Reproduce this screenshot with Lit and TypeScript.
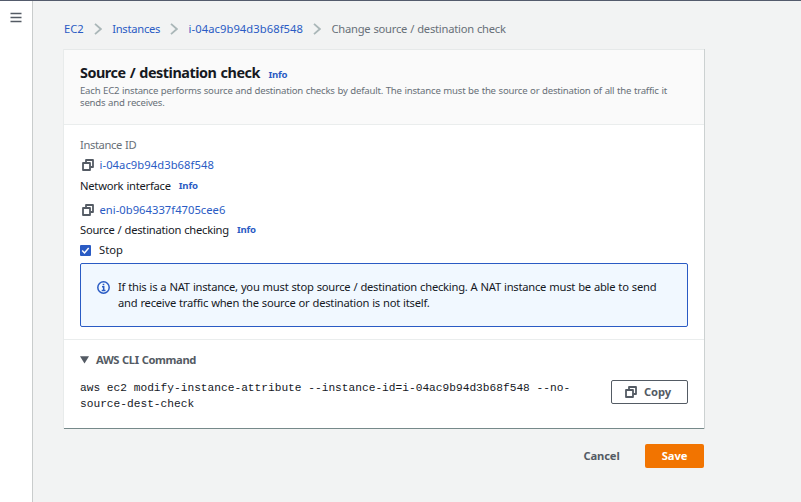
import { LitElement, html, css, svg } from "lit";
import { customElement } from "lit/decorators.js";

const copyIcon = html`<svg class="copy" width="12" height="12" viewBox="0 0 12 12" fill="none" stroke="#545b64" stroke-width="1.8" stroke-linejoin="round">
  ${svg`<path d="M1 4h7v7H1z"/><path d="M4 3.6V1h7v7H8.4"/>`}
</svg>`;

const chevron = html`<svg class="chevron" width="8" height="12" viewBox="0 0 8 12" fill="none" stroke="#aab7b8" stroke-width="1.8">
  <path d="M1 .8 6.8 6 1 11.2"/>
</svg>`;

@customElement("app-root")
export class AppRoot extends LitElement {
  static styles = css`
    :host {
      display: flex;
      box-sizing: border-box;
      width: 801px;
      height: 502px;
      overflow: hidden;
      border-top: 1px solid #545b6c;
      background: #f2f3f3;
      color: #16191f;
      font: 11.2px/16px "Noto Sans", sans-serif;
      letter-spacing: -.24px;
      word-spacing: .4px;
    }
    * { box-sizing: border-box; }
    svg { display: block; flex: none; }
    a { color: #2a5bc4; text-decoration: none; }
    nav.side {
      width: 33px;
      flex: none;
      background: #fff;
      border-right: 1px solid #c9cccc;
      padding: 11px 0 0 10px;
    }
    main { width: 640px; flex: none; margin-left: 31px; }
    .crumbs { display: flex; align-items: center; height: 16px; margin-top: 20px; color: #687078; white-space: nowrap; }
    .crumbs .short { letter-spacing: 0; }
    .crumbs .section { letter-spacing: -.27px; }
    .id { letter-spacing: .07px; }
    .chevron { margin: 0 10.5px 0 10px; }
    .card {
      margin-top: 12px;
      height: 380px;
      background: #fff;
      border-top: 1px solid #e6e9e9;
      border-bottom: 1px solid #76898a;
      box-shadow: 1px 0 0 #ccd1d1, -1px 0 0 #e8ebeb;
    }
    header { height: 75px; padding: 12px 16px 0; background: #fafafa; border-bottom: 1px solid #eaeded; }
    h1 { margin: 0; font-size: 14.4px; line-height: 21px; font-weight: 700; letter-spacing: -.48px; word-spacing: .9px; display: flex; align-items: baseline; }
    .info { font-size: 9.6px; font-weight: 700; margin-left: 8px; letter-spacing: -.2px; }
    h1 .info { margin-left: 8.5px; }
    .desc { margin: 0; font-size: 9.6px; line-height: 12px; color: #687078; letter-spacing: -.21px; white-space: nowrap; }
    .body { height: 215px; padding: 12px 16px 0; border-bottom: 1px solid #eaeded; }
    .row { display: flex; align-items: center; height: 16px; }
    .row .copy { margin: 0 5.5px 0 2px; }
    .muted { color: #687078; letter-spacing: -.37px; }
    .value { margin: 4px 0 5px; }
    .value.eni { margin: 8px 0 4px; }
    .eni .id { letter-spacing: .03px; }
    .stop { margin-top: 4px; letter-spacing: 0; }
    .box { margin-right: 8px; }
    .alert {
      display: flex;
      height: 64px;
      margin-top: 5px;
      padding: 15px 0 0 16px;
      background: #f1f8ff;
      border: 1px solid #2a5bc4;
      border-radius: 2px;
      white-space: nowrap;
    }
    .alert svg { margin: 2px 8px 0 0; }
    .cli { padding: 12px 16px 0; }
    .toggle { display: flex; align-items: center; height: 16px; font-weight: 700; color: #545b64; letter-spacing: -.38px; }
    .toggle svg { margin-right: 7px; }
    .command { display: flex; justify-content: space-between; margin-top: 12px; }
    code { font: 11.2px/16px "Liberation Mono", monospace; letter-spacing: 0; word-spacing: 0; white-space: nowrap; }
    button {
      display: flex;
      align-items: center;
      justify-content: center;
      height: 24px;
      padding: 0;
      border: 1px solid transparent;
      border-radius: 2px;
      background: transparent;
      color: #545b64;
      font: 700 11.2px/16px "Noto Sans", sans-serif;
      letter-spacing: -.12px;
    }
    .copy-btn { width: 77px; background: #fff; border-color: #545b64; justify-content: flex-start; padding-left: 12.5px; }
    .copy-btn svg { margin-right: 7.5px; }
    footer { display: flex; justify-content: flex-end; margin-top: 15px; }
    .cancel { width: 69px; margin-right: 9px; }
    .save { width: 59px; background: #f27400; color: #fff; }
  `;

  render() {
    return html`
      <nav class="side">
        <svg width="12" height="11" viewBox="0 0 12 11" fill="none" stroke="#545b64" stroke-width="1.7"><path d="M.5 1.5h11M.5 5.5h11M.5 9.5h11"/></svg>
      </nav>
      <main>
        <div class="crumbs">
          <a class="short">EC2</a>${chevron}<a class="section">Instances</a>${chevron}<a class="id">i-04ac9b94d3b68f548</a>${chevron}<span>Change source / destination check</span>
        </div>
        <section class="card">
          <header>
            <h1>Source / destination check<a class="info">Info</a></h1>
            <p class="desc">Each EC2 instance performs source and destination checks by default. The instance must be the source or destination of all the traffic it<br>sends and receives.</p>
          </header>
          <div class="body">
            <div class="row muted">Instance ID</div>
            <div class="row value">${copyIcon}<a class="id">i-04ac9b94d3b68f548</a></div>
            <div class="row">Network interface<a class="info">Info</a></div>
            <div class="row value eni">${copyIcon}<a class="id">eni-0b964337f4705cee6</a></div>
            <div class="row">Source / destination checking<a class="info">Info</a></div>
            <div class="row stop">
              <svg class="box" width="11" height="11" viewBox="0 0 11 11"><rect width="11" height="11" rx="1" fill="#2a5bc4"/><path d="M2.2 5.6 4.5 8 8.7 3" fill="none" stroke="#fff" stroke-width="1.5"/></svg>
              <span>Stop</span>
            </div>
            <div class="alert">
              <svg width="13" height="13" viewBox="0 0 13 13" fill="none" stroke="#2a5bc4" stroke-width="1.5"><circle cx="6.5" cy="6.5" r="5.7"/><path d="M5 5.7h1.7v3.5M4.7 9.4h3.8M5.7 3.5h1.6"/></svg>
              <div>If this is a NAT instance, you must stop source / destination checking. A NAT instance must be able to send<br>and receive traffic when the source or destination is not itself.</div>
            </div>
          </div>
          <div class="cli">
            <div class="toggle"><svg width="9" height="8" viewBox="0 0 9 8"><path d="M0 .3h9L4.5 7.5z" fill="#545b64"/></svg>AWS CLI Command</div>
            <div class="command">
              <code>aws ec2 modify-instance-attribute --instance-id=i-04ac9b94d3b68f548 --no-<br>source-dest-check</code>
              <button class="copy-btn">${copyIcon}Copy</button>
            </div>
          </div>
        </section>
        <footer><button class="cancel">Cancel</button><button class="save">Save</button></footer>
      </main>
    `;
  }
}
